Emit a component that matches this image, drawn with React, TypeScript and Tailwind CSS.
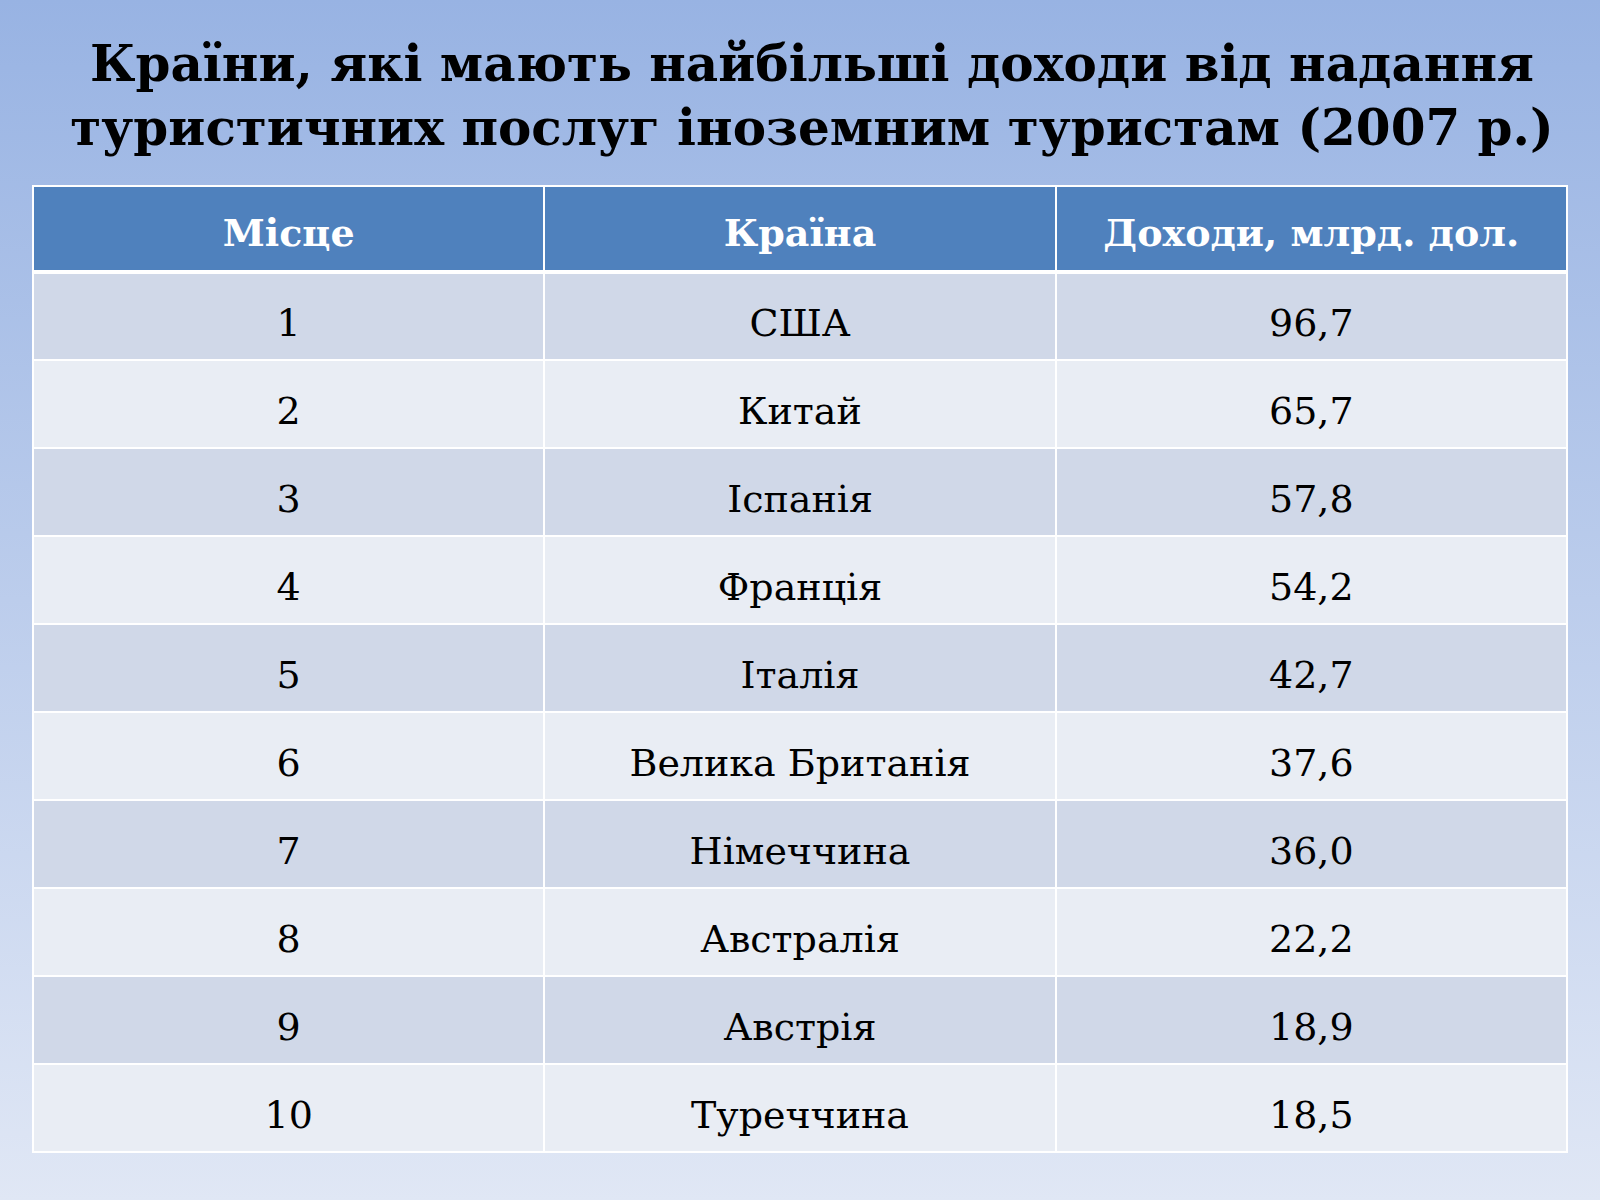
const rows: [string, string, string][] = [
  ["1", "США", "96,7"],
  ["2", "Китай", "65,7"],
  ["3", "Іспанія", "57,8"],
  ["4", "Франція", "54,2"],
  ["5", "Італія", "42,7"],
  ["6", "Велика Британія", "37,6"],
  ["7", "Німеччина", "36,0"],
  ["8", "Австралія", "22,2"],
  ["9", "Австрія", "18,9"],
  ["10", "Туреччина", "18,5"],
]

export default function App() {
  return (
    <div className="w-[1600px] h-[1200px] bg-gradient-to-b from-[#98b3e3] via-[#bccdec] to-[#e0e7f5] font-['DejaVu_Serif',serif] text-black overflow-hidden">
      <h1 className="pt-[32px] pl-6 text-center text-[50px] leading-[64px] font-bold">
        Країни, які мають найбільші доходи від надання
        <br />
        туристичних послуг іноземним туристам (2007 р.)
      </h1>

      <table className="mt-[25px] ml-[32px] w-[1536px] table-fixed border-collapse">
        <thead>
          <tr className="h-[86px] bg-[#4f81bd] text-white">
            <th className="border-[2px] border-white border-b-[4px] pt-[8px] text-[38px] font-bold">Місце</th>
            <th className="border-[2px] border-white border-b-[4px] pt-[8px] text-[38px] font-bold">Країна</th>
            <th className="border-[2px] border-white border-b-[4px] pt-[8px] text-[38px] font-bold">Доходи, млрд. дол.</th>
          </tr>
        </thead>
        <tbody>
          {rows.map(([place, country, income], i) => (
            <tr key={place} className={i % 2 === 0 ? "h-[88px] bg-[#d0d8e8]" : "h-[88px] bg-[#e9edf4]"}>
              <td className="border-[2px] border-white pt-[14px] text-center text-[38px]">{place}</td>
              <td className="border-[2px] border-white pt-[14px] text-center text-[38px]">{country}</td>
              <td className="border-[2px] border-white pt-[14px] text-center text-[38px]">{income}</td>
            </tr>
          ))}
        </tbody>
      </table>
    </div>
  )
}
